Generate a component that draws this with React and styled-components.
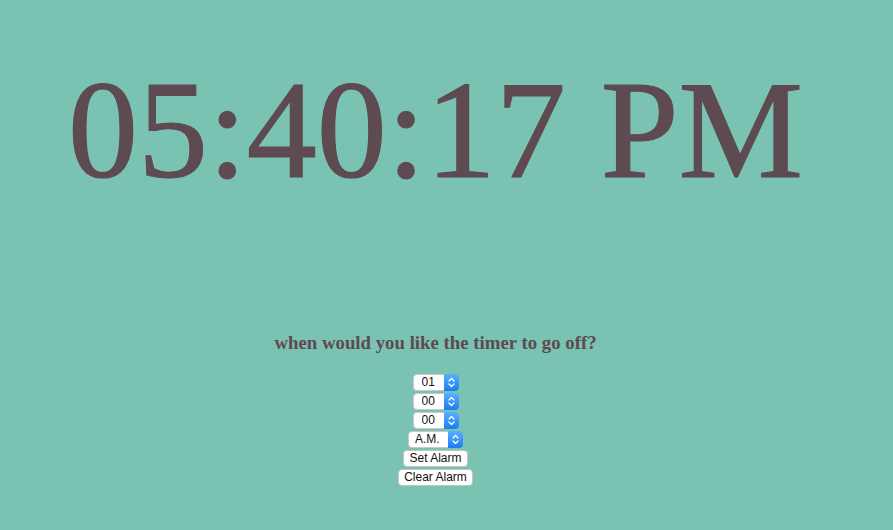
import React from "react";
import styled, { createGlobalStyle } from "styled-components";

const ink = "#5e4a51";

const GlobalStyle = createGlobalStyle`
  html, body {
    margin: 0;
    padding: 0;
    background-color: #7ac2b2;
  }
  body {
    font-family: "Liberation Serif", "Times New Roman", serif;
  }
`;

const Page = styled.div`
  min-height: 530px;
  padding-right: 22px;
  display: flex;
  flex-direction: column;
  align-items: center;
  box-sizing: border-box;
`;

const Clock = styled.h1`
  margin: 49px 0 0;
  font-size: 140px;
  font-weight: normal;
  line-height: 161px;
  color: ${ink};
  -webkit-text-stroke: 1.2px ${ink};
  white-space: nowrap;
`;

const Prompt = styled.h3`
  margin: 122px 0 0;
  font-size: 18.8px;
  font-weight: bold;
  line-height: 21px;
  color: ${ink};
`;

const Form = styled.form`
  margin-top: 21px;
  display: flex;
  flex-direction: column;
  align-items: center;
  gap: 2px;
`;

const SelectWrap = styled.div`
  position: relative;
  display: inline-flex;
  height: 17px;
`;

const Select = styled.select`
  appearance: none;
  -webkit-appearance: none;
  width: ${(p) => p.$width}px;
  height: 17px;
  margin: 0;
  padding: 0 18px 0 ${(p) => p.$pad}px;
  border: 1px solid #c9c9c9;
  border-radius: 4px;
  background: #fff;
  font-family: "Liberation Sans", Arial, sans-serif;
  font-size: 12px;
  line-height: 15px;
  color: #111;
  box-sizing: border-box;
  outline: none;
`;

const Arrows = styled.span`
  position: absolute;
  top: 0;
  right: 0;
  width: 15px;
  height: 17px;
  border-radius: 0 4px 4px 0;
  background: linear-gradient(#5ab0fd, #1a7cf6);
  display: flex;
  align-items: center;
  justify-content: center;
  pointer-events: none;
`;

const Button = styled.button`
  height: 17px;
  margin: 0;
  padding: 0 5px;
  border: 1px solid #c4c4c4;
  border-radius: 4px;
  background: #fff;
  font-family: "Liberation Sans", Arial, sans-serif;
  font-size: 12px;
  line-height: 15px;
  color: #111;
  box-sizing: border-box;
`;

const Chevrons = () => (
  <svg width="7" height="11" viewBox="0 0 7 11">
    <path
      d="M1 4 L3.5 1.5 L6 4 M1 7 L3.5 9.5 L6 7"
      fill="none"
      stroke="#fff"
      strokeWidth="1.3"
      strokeLinecap="round"
      strokeLinejoin="round"
    />
  </svg>
);

const Picker = ({ options, width, pad }) => (
  <SelectWrap>
    <Select $width={width} $pad={pad} defaultValue={options[0]}>
      {options.map((o) => (
        <option key={o}>{o}</option>
      ))}
    </Select>
    <Arrows>
      <Chevrons />
    </Arrows>
  </SelectWrap>
);

const pad2 = (n) => String(n).padStart(2, "0");
const hours = Array.from({ length: 12 }, (_, i) => pad2(i + 1));
const minutes = Array.from({ length: 60 }, (_, i) => pad2(i));

export default function App() {
  return (
    <>
      <GlobalStyle />
      <Page>
        <Clock>05:40:17 PM</Clock>
        <Prompt>when would you like the timer to go off?</Prompt>
        <Form onSubmit={(e) => e.preventDefault()}>
          <Picker options={hours} width={46} pad={8} />
          <Picker options={minutes} width={46} pad={8} />
          <Picker options={minutes} width={46} pad={8} />
          <Picker options={["A.M.", "P.M."]} width={55} pad={6} />
          <Button type="button">Set Alarm</Button>
          <Button type="button">Clear Alarm</Button>
        </Form>
      </Page>
    </>
  );
}
